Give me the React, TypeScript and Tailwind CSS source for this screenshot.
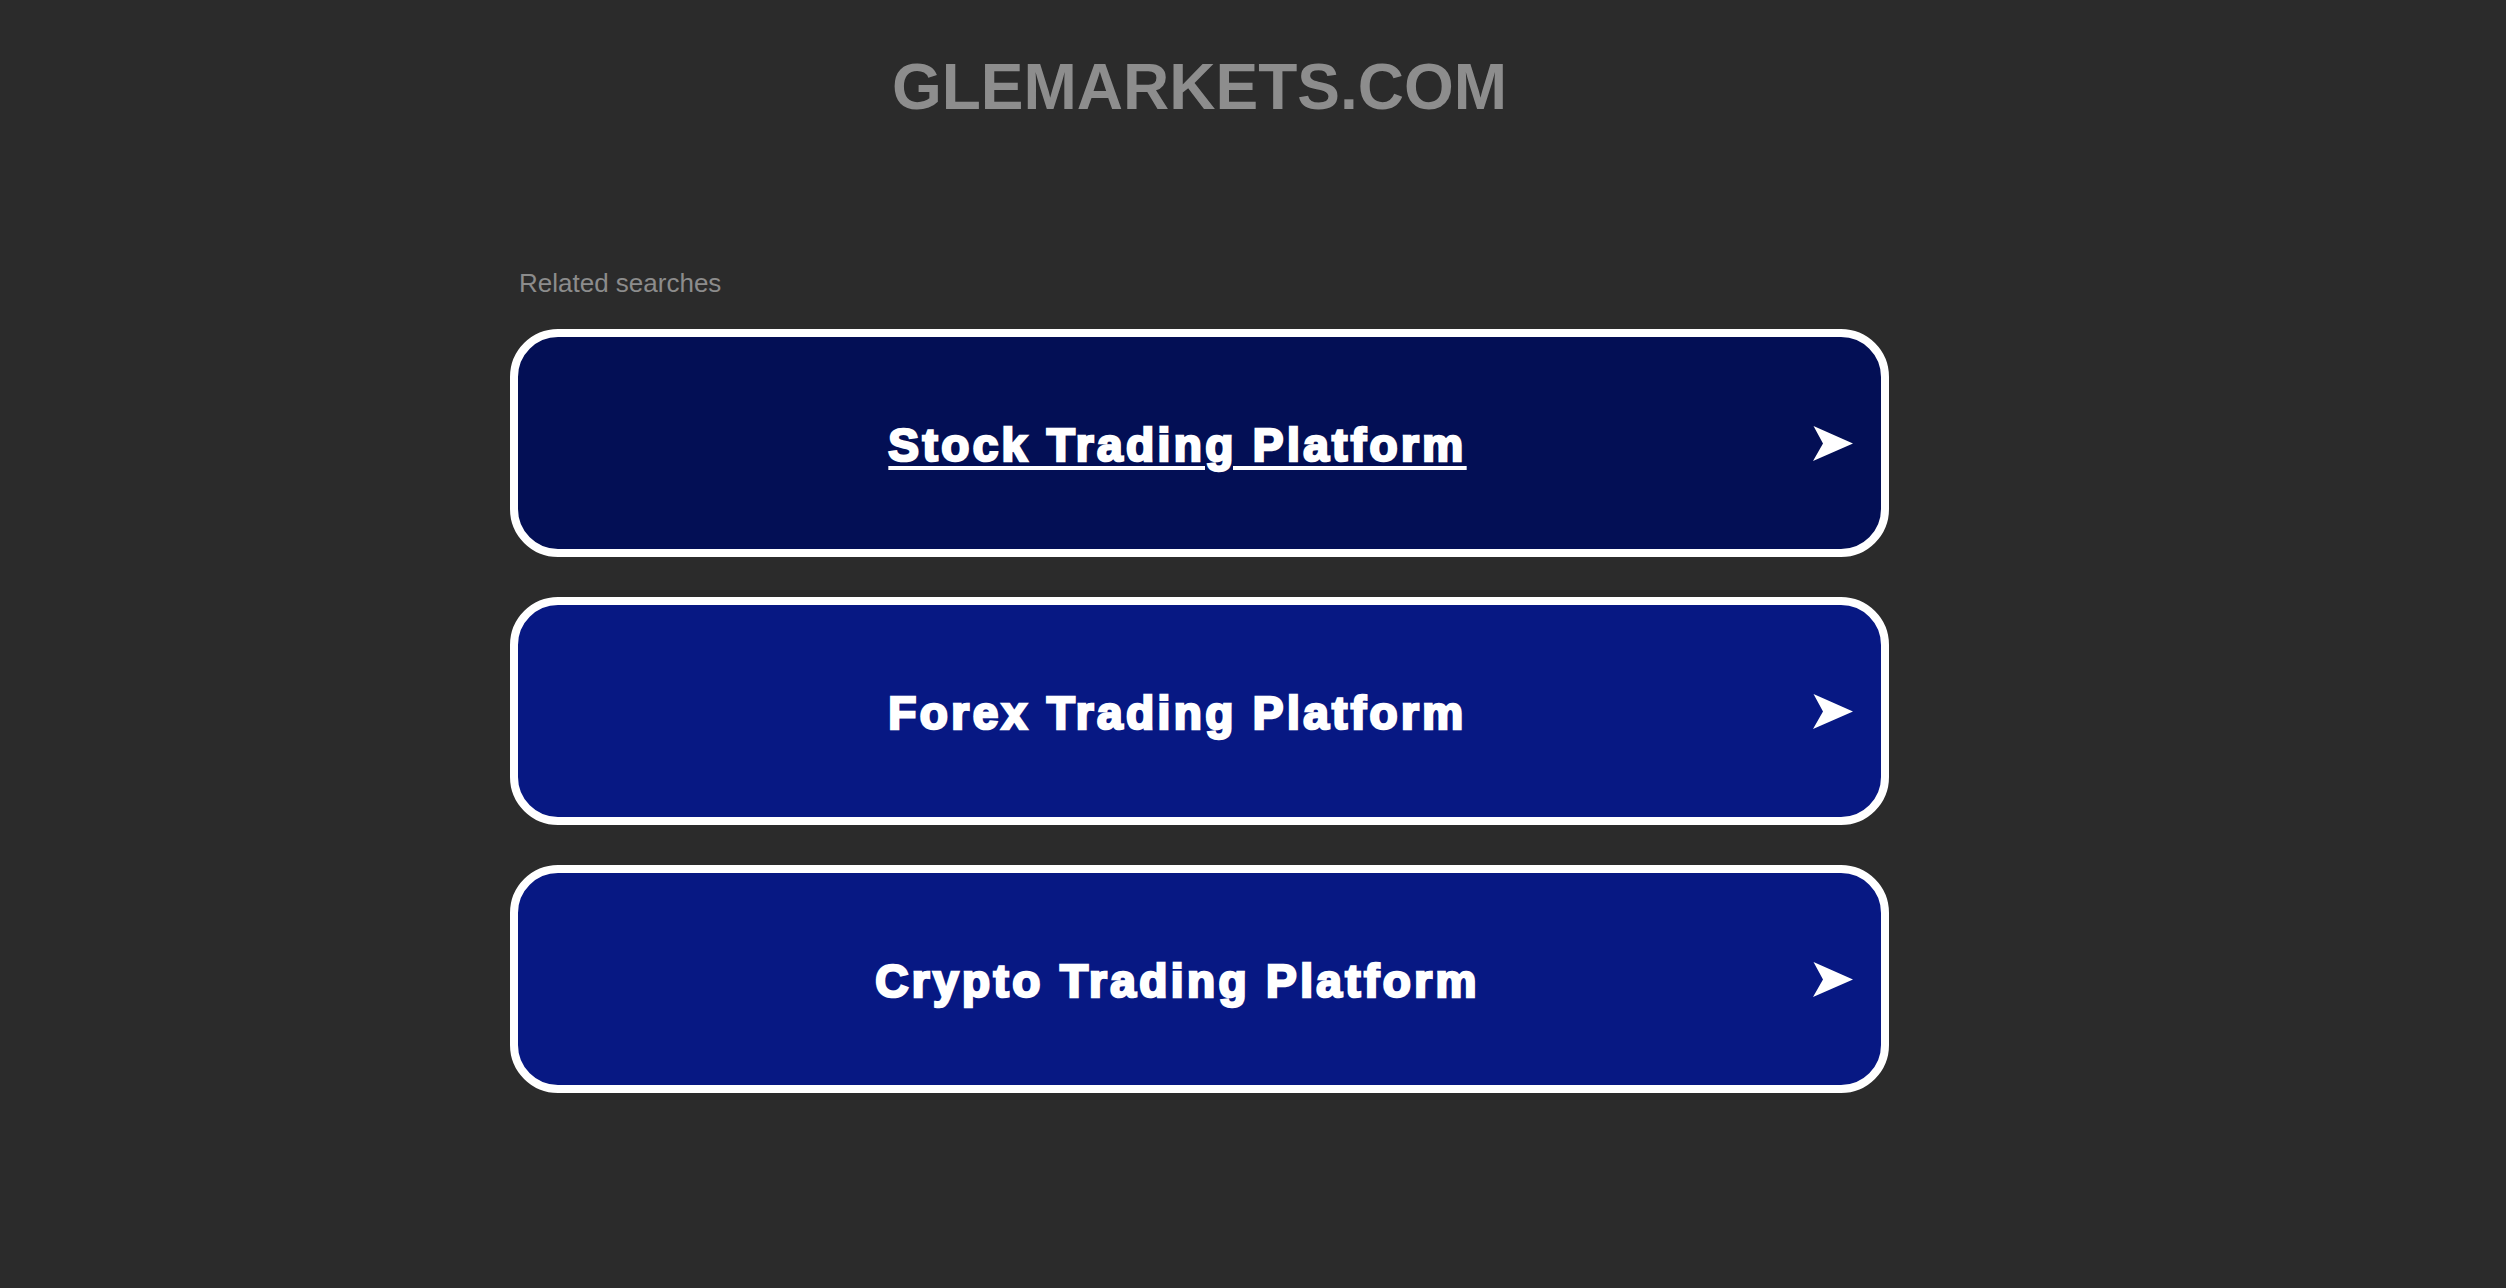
import React from "react";

const items = [
  { label: "Stock Trading Platform", active: true },
  { label: "Forex Trading Platform", active: false },
  { label: "Crypto Trading Platform", active: false },
];

function Arrow() {
  return (
    <svg width="40" height="35" viewBox="0 0 40 35" className="shrink-0">
      <polygon points="0.5,0 40,17.5 0,35 10,17.5" fill="#ffffff" />
    </svg>
  );
}

export default function App() {
  return (
    <div className="min-h-screen w-full bg-[#2b2b2b] flex justify-center pr-[107px] font-['Liberation_Sans',Arial,sans-serif]">
      <div className="w-[1379px] flex flex-col">
        <h1 className="pt-[55px] text-center text-[64px] leading-none font-bold text-[#8d8d8d]">
          GLEMARKETS.COM
        </h1>
        <div className="mt-[151px] pl-[9px] text-[26px] leading-none text-[#8c8c8c]">
          Related searches
        </div>
        <div className="mt-[33px] flex flex-col gap-[40px]">
          {items.map((it) => (
            <a
              key={it.label}
              href="#"
              className={
                "h-[228px] rounded-[48px] border-[8px] border-white flex items-center pl-[24px] pr-[28px] " +
                (it.active ? "bg-[#030f55]" : "bg-[#071883]")
              }
            >
              <span
                className={
                  "flex-1 text-center text-white font-bold text-[46px] leading-none tracking-[3.4px] pt-[4px] [-webkit-text-stroke:2.6px_#ffffff] " +
                  (it.active
                    ? "underline decoration-[4px] underline-offset-[5px]"
                    : "no-underline")
                }
              >
                {it.label}
              </span>
              <Arrow />
            </a>
          ))}
        </div>
      </div>
    </div>
  );
}
